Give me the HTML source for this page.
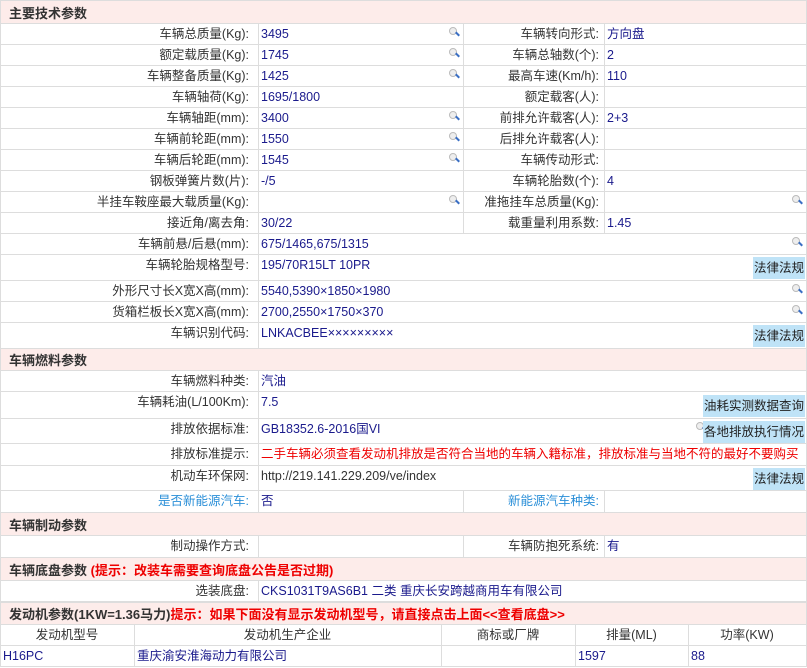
<!DOCTYPE html>
<html><head><meta charset="utf-8"><style>
*{margin:0;padding:0;box-sizing:border-box}
body{width:807px;height:668px;background:#fff;font-family:"Liberation Sans","Noto Sans CJK SC",sans-serif;font-size:12.5px;color:#333;position:relative;overflow:hidden}
.r{position:absolute;left:0;width:807px;border-top:1px solid #ddd;border-left:1px solid #ddd;border-right:1px solid #ddd;display:flex}
.h{background:#fdecea;font-weight:bold;color:#333;padding-left:8px;align-items:center;font-size:13px}
.c{position:relative;border-left:1px solid #ddd;padding:2px 3px 2px 2px;line-height:17px;white-space:nowrap}
.c:first-child{border-left:none}
.l{width:257px;text-align:right;padding-right:9px}
.v{color:#1a1a8c}
.l2{width:141px;text-align:right;padding-right:5px}
.w1{width:205px}.w2{flex:1}
.s{position:absolute;right:4px;top:3px;width:10px;height:10px}
.s::before{content:"";position:absolute;left:0;top:0;width:6px;height:6px;border:1px solid #bbb;border-radius:50%;background:#eee}
.s::after{content:"";position:absolute;left:6px;top:6px;width:5px;height:2px;background:#3a6fc4;transform:rotate(45deg)}
.b{position:absolute;right:1px;top:2px;background:#bfe3f7;color:#222;padding:0 1px;line-height:22px;font-size:12.5px}
.red{color:#e00}
.blue{color:#2b8fd8}
</style></head><body>
<div class="r h" style="top:0;height:23px">主要技术参数</div>
<div class="r" style="top:23px;height:21px"><div class="c l">车辆总质量(Kg):</div><div class="c w1 v">3495<span class="s"></span></div><div class="c l2">车辆转向形式:</div><div class="c w2 v">方向盘</div></div>
<div class="r" style="top:44px;height:21px"><div class="c l">额定载质量(Kg):</div><div class="c w1 v">1745<span class="s"></span></div><div class="c l2">车辆总轴数(个):</div><div class="c w2 v">2</div></div>
<div class="r" style="top:65px;height:21px"><div class="c l">车辆整备质量(Kg):</div><div class="c w1 v">1425<span class="s"></span></div><div class="c l2">最高车速(Km/h):</div><div class="c w2 v">110</div></div>
<div class="r" style="top:86px;height:21px"><div class="c l">车辆轴荷(Kg):</div><div class="c w1 v">1695/1800</div><div class="c l2">额定载客(人):</div><div class="c w2 v"></div></div>
<div class="r" style="top:107px;height:21px"><div class="c l">车辆轴距(mm):</div><div class="c w1 v">3400<span class="s"></span></div><div class="c l2">前排允许载客(人):</div><div class="c w2 v">2+3</div></div>
<div class="r" style="top:128px;height:21px"><div class="c l">车辆前轮距(mm):</div><div class="c w1 v">1550<span class="s"></span></div><div class="c l2">后排允许载客(人):</div><div class="c w2 v"></div></div>
<div class="r" style="top:149px;height:21px"><div class="c l">车辆后轮距(mm):</div><div class="c w1 v">1545<span class="s"></span></div><div class="c l2">车辆传动形式:</div><div class="c w2 v"></div></div>
<div class="r" style="top:170px;height:21px"><div class="c l">钢板弹簧片数(片):</div><div class="c w1 v">-/5</div><div class="c l2">车辆轮胎数(个):</div><div class="c w2 v">4</div></div>
<div class="r" style="top:191px;height:21px"><div class="c l">半挂车鞍座最大载质量(Kg):</div><div class="c w1 v"><span class="s"></span></div><div class="c l2">准拖挂车总质量(Kg):</div><div class="c w2 v"><span class="s"></span></div></div>
<div class="r" style="top:212px;height:21px"><div class="c l">接近角/离去角:</div><div class="c w1 v">30/22</div><div class="c l2">载重量利用系数:</div><div class="c w2 v">1.45</div></div>
<div class="r" style="top:233px;height:21px"><div class="c l">车辆前悬/后悬(mm):</div><div class="c w2 v">675/1465,675/1315<span class="s"></span></div></div>
<div class="r" style="top:254px;height:26px"><div class="c l">车辆轮胎规格型号:</div><div class="c w2 v">195/70R15LT 10PR<span class="b">法律法规</span></div></div>
<div class="r" style="top:280px;height:21px"><div class="c l">外形尺寸长X宽X高(mm):</div><div class="c w2 v">5540,5390×1850×1980<span class="s"></span></div></div>
<div class="r" style="top:301px;height:21px"><div class="c l">货箱栏板长X宽X高(mm):</div><div class="c w2 v">2700,2550×1750×370<span class="s"></span></div></div>
<div class="r" style="top:322px;height:26px"><div class="c l">车辆识别代码:</div><div class="c w2 v">LNKACBEE×××××××××<span class="b">法律法规</span></div></div>
<div class="r h" style="top:348px;height:22px">车辆燃料参数</div>
<div class="r" style="top:370px;height:21px"><div class="c l">车辆燃料种类:</div><div class="c w2 v">汽油</div></div>
<div class="r" style="top:391px;height:27px"><div class="c l">车辆耗油(L/100Km):</div><div class="c w2 v">7.5<span class="b" style="top:3px">油耗实测数据查询</span></div></div>
<div class="r" style="top:418px;height:25px"><div class="c l">排放依据标准:</div><div class="c w2 v">GB18352.6-2016国VI<span class="s" style="right:100px"></span><span class="b">各地排放执行情况</span></div></div>
<div class="r" style="top:443px;height:22px"><div class="c l">排放标准提示:</div><div class="c w2 red">二手车辆必须查看发动机排放是否符合当地的车辆入籍标准，排放标准与当地不符的最好不要购买</div></div>
<div class="r" style="top:465px;height:25px"><div class="c l">机动车环保网:</div><div class="c w2">http://219.141.229.209/ve/index<span class="b">法律法规</span></div></div>
<div class="r" style="top:490px;height:22px"><div class="c l blue">是否新能源汽车:</div><div class="c w1 v">否</div><div class="c l2 blue">新能源汽车种类:</div><div class="c w2 v"></div></div>
<div class="r h" style="top:512px;height:23px">车辆制动参数</div>
<div class="r" style="top:535px;height:22px"><div class="c l">制动操作方式:</div><div class="c w1 v"></div><div class="c l2">车辆防抱死系统:</div><div class="c w2 v">有</div></div>
<div class="r h" style="top:557px;height:23px">车辆底盘参数&nbsp;<span class="red">(提示：改装车需要查询底盘公告是否过期)</span></div>
<div class="r" style="top:580px;height:21px"><div class="c l">选装底盘:</div><div class="c w2 v">CKS1031T9AS6B1 二类 重庆长安跨越商用车有限公司</div></div>
<div class="r h" style="top:601px;height:23px;border-top:2px solid #ddd">发动机参数(1KW=1.36马力)<span class="red">提示：如果下面没有显示发动机型号，请直接点击上面&lt;&lt;查看底盘&gt;&gt;</span></div>
<div class="r" style="top:624px;height:21px;background:#fff"><div class="c" style="width:133px;text-align:center">发动机型号</div><div class="c" style="width:307px;text-align:center">发动机生产企业</div><div class="c" style="width:134px;text-align:center">商标或厂牌</div><div class="c" style="width:113px;text-align:center">排量(ML)</div><div class="c w2" style="text-align:center">功率(KW)</div></div>
<div class="r" style="top:645px;height:22px;border-bottom:1px solid #ddd"><div class="c v" style="width:133px">H16PC</div><div class="c v" style="width:307px">重庆渝安淮海动力有限公司</div><div class="c v" style="width:134px"></div><div class="c v" style="width:113px">1597</div><div class="c w2 v">88</div></div>
</body></html>
